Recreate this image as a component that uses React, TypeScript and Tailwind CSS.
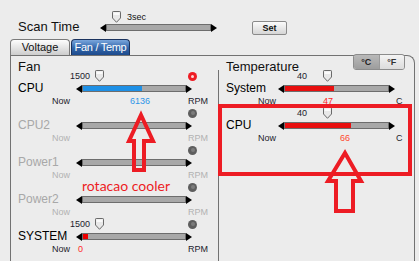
import React from "react";

function Thumb() {
  return (
    <svg width="9" height="12" viewBox="0 0 9 12" className="block">
      <path
        d="M1.2 0.5 H7.8 Q8.5 0.5 8.5 1.2 V7 L4.5 11.3 L0.5 7 V1.2 Q0.5 0.5 1.2 0.5 Z"
        fill="#e8e8e8"
        stroke="#6a6a6a"
        strokeWidth="1"
      />
      <path d="M1.5 1.5 H7.5 V4 H1.5 Z" fill="#fafafa" />
    </svg>
  );
}

function Slider({
  width,
  fill,
  fillColor,
}: {
  width: string;
  fill?: number;
  fillColor?: string;
}) {
  return (
    <div className={`flex h-[9px] items-center ${width}`}>
      <div className="h-0 w-0 border-y-[4.5px] border-r-[6px] border-y-transparent border-r-black" />
      <div className="h-[7px] flex-1 border border-[#6d6d6d] bg-[#a8a8a8]">
        {fill ? <div className={`h-full ${fillColor}`} style={{ width: fill }} /> : null}
      </div>
      <div className="h-0 w-0 border-y-[4.5px] border-l-[6px] border-y-transparent border-l-black" />
    </div>
  );
}

function Dot({ red }: { red?: boolean }) {
  return red ? (
    <div className="flex h-[9px] w-[9px] items-center justify-center rounded-full bg-[#ee1c24]">
      <div className="h-[3px] w-[3px] rounded-full bg-[#ffd6d6]" />
    </div>
  ) : (
    <div className="flex h-[9px] w-[9px] items-center justify-center rounded-full bg-[#5e5e5e]">
      <div className="h-[4px] w-[4px] rounded-full bg-[#7c7c7c]" />
    </div>
  );
}

interface FanProps {
  label: string;
  on?: boolean;
  thumb?: boolean;
  redDot?: boolean;
  fill?: number;
  fillColor?: string;
  value?: string;
  valueColor?: string;
  nowW: string;
  valueW: string;
}

function FanBlock(p: FanProps) {
  const sub = p.on ? "text-[#1c1c2c]" : "text-[#b2b2b2]";
  return (
    <div className="w-[190px]">
      <div className="flex h-[12px] items-end">
        {p.thumb ? (
          <>
            <div className="w-[52px]" />
            <span className="mb-[1px] text-[9px] leading-[10px] text-[#1c1c2c]">1500</span>
            <div className="ml-[5px]">
              <Thumb />
            </div>
          </>
        ) : null}
        <div className="mr-[11px] ml-auto self-center">
          <Dot red={p.redDot} />
        </div>
      </div>
      <div className="flex h-[13px] items-center">
        <div
          className={`w-[58px] text-[12px] leading-[13px] ${p.on ? "text-black" : "text-[#a8a8a8]"}`}
        >
          {p.label}
        </div>
        <Slider width="w-[116px]" fill={p.fill} fillColor={p.fillColor} />
      </div>
      <div className={`flex h-[12px] items-center text-[9px] leading-[10px] ${sub}`}>
        <div className="w-[34px]" />
        <div className={p.nowW}>Now</div>
        <div className={`${p.valueW} ${p.valueColor ?? ""}`}>{p.value}</div>
        <div>RPM</div>
      </div>
    </div>
  );
}

function TempBlock({
  label,
  fill,
  value,
  nowW,
  valueW,
  valueColor,
}: {
  label: string;
  fill: number;
  value: string;
  nowW: string;
  valueW: string;
  valueColor: string;
}) {
  return (
    <div className="w-[185px]">
      <div className="flex h-[12px] items-end">
        <div className="w-[71px]" />
        <span className="mb-[1px] text-[9px] leading-[10px] text-[#1c1c2c]">40</span>
        <div className="ml-[16px]">
          <Thumb />
        </div>
      </div>
      <div className="flex h-[13px] items-center">
        <div className="w-[52px] text-[12px] leading-[13px] text-black">{label}</div>
        <Slider width="w-[117px]" fill={fill} fillColor="bg-[#e80f0f]" />
      </div>
      <div className="flex h-[12px] items-center text-[9px] leading-[10px] text-[#1c1c2c]">
        <div className="w-[32px]" />
        <div className={nowW}>Now</div>
        <div className={`${valueW} ${valueColor}`}>{value}</div>
        <div>C</div>
      </div>
    </div>
  );
}

export default function App() {
  return (
    <div className="relative h-[261px] w-[419px] overflow-hidden bg-[#ececec] font-['Liberation_Sans',Arial,sans-serif] text-[#111]">
      {/* scan time */}
      <div className="flex h-[39px]">
        <div className="w-[100px] pt-[19px] pl-[18px] text-[13px] leading-[16px]">Scan Time</div>
        <div className="w-[117px]">
          <div className="flex h-[23px] items-end">
            <div className="ml-[12px]">
              <Thumb />
            </div>
            <span className="mt-[12px] ml-[6px] self-start text-[9px] leading-[10px]">3sec</span>
          </div>
          <Slider width="w-[117px]" />
        </div>
        <div className="ml-[35px] pt-[21px]">
          <button className="flex h-[14px] w-[35px] items-center justify-center rounded-[2px] border border-[#8a8a8a] bg-gradient-to-b from-[#fbfbfb] to-[#d6d6d6] text-[9px] leading-none font-bold">
            Set
          </button>
        </div>
      </div>

      {/* tabs */}
      <div className="flex h-[16px] items-end gap-px pl-[10px]">
        <div className="flex h-[16px] w-[60px] items-center justify-center rounded-t-[4px] border border-b-0 border-[#7a7a7a] bg-gradient-to-b from-[#fdfdfd] to-[#cdcdcd] text-[11px] leading-none">
          Voltage
        </div>
        <div className="flex h-[16px] w-[59px] items-center justify-center rounded-t-[4px] border border-b-0 border-[#1b335e] bg-gradient-to-b from-[#7aa6dc] via-[#3569ad] to-[#1d4a8c] text-[11px] leading-none tracking-[-0.3px] text-white">
          Fan / Temp
        </div>
      </div>

      {/* panel */}
      <div className="relative ml-[10px] flex h-[206px] w-[405px] rounded-tr-[8px] border-x border-t border-[#727272]">
        <div className="w-[207px] pl-[7px]">
          <div className="h-[14px] pt-[3px] text-[13px] leading-[16px]">Fan</div>
          <FanBlock
            label="CPU"
            on
            thumb
            redDot
            fill={59}
            fillColor="bg-[#1e90e6]"
            value="6136"
            valueColor="text-[#2f95e8]"
            nowW="w-[78px]"
            valueW="w-[58px]"
          />
          <FanBlock label="CPU2" nowW="w-[136px]" valueW="w-0" />
          <FanBlock label="Power1" nowW="w-[136px]" valueW="w-0" />
          <FanBlock label="Power2" nowW="w-[136px]" valueW="w-0" />
          <FanBlock
            label="SYSTEM"
            on
            thumb
            fill={5}
            fillColor="bg-[#ee0000]"
            value="0"
            valueColor="text-[#ff2a2a]"
            nowW="w-[26px]"
            valueW="w-[110px]"
          />
        </div>
        <div className="flex flex-1 flex-col">
          <div className="h-[14px] pt-[3px] pl-[8px] text-[13px] leading-[16px]">Temperature</div>
          <div className="flex-1 border-l border-[#727272] pl-[7px]">
            <TempBlock
              label="System"
              fill={49}
              value="47"
              valueColor="text-[#ff2424]"
              nowW="w-[65px]"
              valueW="w-[73px]"
            />
            <TempBlock
              label="CPU"
              fill={66}
              value="66"
              valueColor="text-[#ff4a2e]"
              nowW="w-[82px]"
              valueW="w-[56px]"
            />
          </div>
        </div>

        {/* °C / °F toggle */}
        <div className="absolute top-[-2px] left-[342px] flex h-[16px] w-[52px] overflow-hidden rounded-[3px] border border-[#8c8c8c] text-[9px] leading-none font-bold">
          <div className="flex flex-1 items-center justify-center bg-gradient-to-b from-[#b9b9b9] to-[#9d9d9d] text-[#222]">
            °C
          </div>
          <div className="flex flex-1 items-center justify-center border-l border-[#9a9a9a] bg-gradient-to-b from-[#f4f4f4] to-[#dcdcdc] text-[#333]">
            °F
          </div>
        </div>
      </div>

      {/* annotations */}
      <div className="absolute top-[104px] left-[218px] h-[72px] w-[194px] border-4 border-[#ed1c24]" />
      <svg className="absolute top-0 left-0" width="419" height="261">
        <polygon
          points="141,115 153,141 144,141 144,170 134,170 134,141 129,141"
          fill="none"
          stroke="#ed1c24"
          strokeWidth="4"
          strokeLinejoin="miter"
        />
        <polygon
          points="345,153 361,181 353,181 353,211 336,211 336,181 328,181"
          fill="none"
          stroke="#ed1c24"
          strokeWidth="4"
          strokeLinejoin="miter"
        />
      </svg>
      <div className="absolute top-[177px] left-[82px] font-['Lato',sans-serif] text-[14px] leading-[18px] text-[#ed1c24]">
        rotacao cooler
      </div>
    </div>
  );
}
